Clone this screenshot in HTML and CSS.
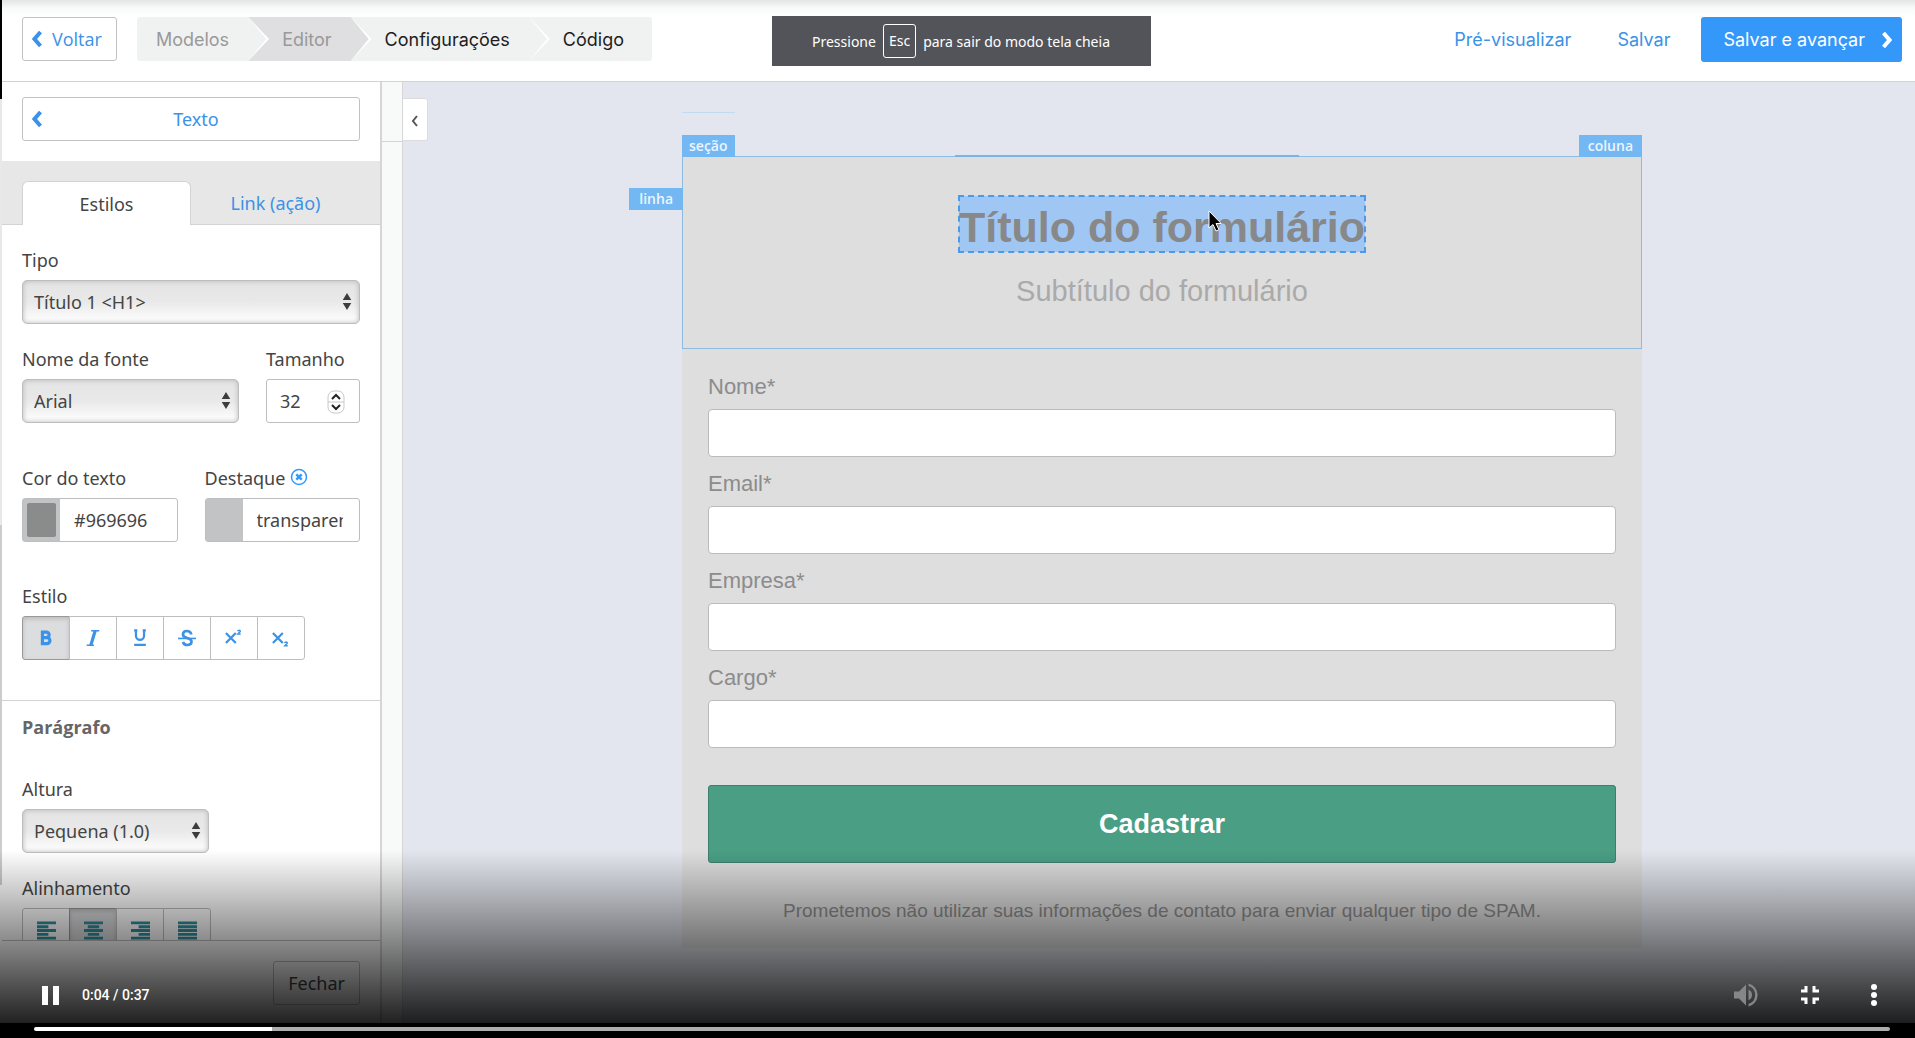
FILE: index.html
```html
<!DOCTYPE html>
<html lang="pt-BR">
<head>
  <meta charset="UTF-8" />
  <meta name="viewport" content="width=device-width, initial-scale=1.0" />
  <title>Editor de formulário</title>
  <link rel="stylesheet" href="styles.css">
</head>
<body>
  <header class="topbar">
    <button class="btn voltar">
      <svg class="chevron" viewBox="0 0 10 18"><path d="M8.500 2 2.500 9l6 7" /></svg>
      Voltar
    </button>
    <nav class="steps">
      <a href="#" class="step done">Modelos</a>
      <a href="#" class="step done current">Editor</a>
      <a href="#" class="step">Configurações</a>
      <a href="#" class="step">Código</a>
    </nav>
    <div class="actions">
      <a href="#">Pré-visualizar</a>
      <a href="#">Salvar</a>
      <button class="avancar">
        Salvar e avançar
        <svg class="chevron" viewBox="0 0 10 18"><path d="M1.500 2l6 7-6 7" /></svg>
      </button>
    </div>
  </header>

  <main class="workspace">
    <aside class="sidebar">
      <div class="panel-head">
        <button class="btn texto">
          <svg class="chevron" viewBox="0 0 10 18"><path d="M8.500 2 2.500 9l6 7" /></svg>
          <span>Texto</span>
        </button>
      </div>
      <div class="tabs">
        <button class="tab active">Estilos</button>
        <button class="tab">Link (ação)</button>
      </div>

      <div class="panel">
        <div class="group">
          <label for="tipo">Tipo</label>
          <div class="select">
            <select id="tipo"><option>Título 1 &lt;H1&gt;</option></select>
            <svg viewBox="0 0 10 18"><path d="M5 0l4.500 7.500h-9zM5 18l4.500-7.500h-9z" /></svg>
          </div>
        </div>

        <div class="row">
          <div class="group fonte">
            <label for="fonte">Nome da fonte</label>
            <div class="select">
              <select id="fonte"><option>Arial</option></select>
              <svg viewBox="0 0 10 18"><path d="M5 0l4.500 7.500h-9zM5 18l4.500-7.500h-9z" /></svg>
            </div>
          </div>
          <div class="group tamanho">
            <label for="tamanho">Tamanho</label>
            <div class="number">
              <input type="number" id="tamanho" value="32" />
              <svg viewBox="0 0 18 24">
                <rect x="1" y="1" width="16" height="22" rx="6" fill="#fff" stroke="#c8c8c8" />
                <path d="M1 12h16" stroke="#c8c8c8" />
                <path d="M5 9l4-4 4 4M5 15l4 4 4-4" fill="none" stroke="#222" stroke-width="2" />
              </svg>
            </div>
          </div>
        </div>

        <div class="row cores">
          <div class="group">
            <label for="cor">Cor do texto</label>
            <div class="color">
              <span class="swatch"><i></i></span>
              <input type="text" id="cor" value="#969696" />
            </div>
          </div>
          <div class="group">
            <label for="destaque">Destaque
              <svg class="clear" viewBox="0 0 18 18"><circle cx="9" cy="9" r="7.500" /><path class="x" d="M6.300 6.300l5.400 5.400M11.700 6.300l-5.400 5.400" /></svg>
            </label>
            <div class="color">
              <span class="swatch"></span>
              <input type="text" id="destaque" value="transparent" />
            </div>
          </div>
        </div>

        <div class="group estilo">
          <span class="label">Estilo</span>
          <div class="btn-group">
            <button class="on" aria-label="Negrito"><svg viewBox="0 0 20 20"><path d="M6 3.500h4.500a3 3 0 0 1 0 6H6zM6 9.500h5a3.400 3.400 0 0 1 0 6.800H6z" stroke-width="3.500" /></svg></button>
            <button aria-label="Itálico"><svg viewBox="0 0 20 20"><path d="M8 2h9M3 18h8" stroke-width="1.800" /><path d="M12.500 2l-5 16" stroke-width="3.500" /></svg></button>
            <button aria-label="Sublinhado"><svg viewBox="0 0 20 20"><path d="M5.500 1v6.500a4.500 4.500 0 0 0 9 0V1M3.500 1.500H7M13 1.500h3.500M3.500 17.500h13" stroke-width="2.500" /></svg></button>
            <button aria-label="Tachado"><svg viewBox="0 0 20 20"><path d="M14.500 6V5C13.500 3 12 2.200 10 2.200 7.500 2.200 5.500 3.500 5.500 6c0 2.500 2.500 3.200 4.500 4 2.500.8 5 1.500 5 4 0 2.300-2 3.800-4.700 3.800-2.300 0-4-1-4.800-3.300" stroke-width="3" /><path d="M0 10.500h20" stroke-width="1.800" /></svg></button>
            <button aria-label="Sobrescrito"><svg viewBox="0 0 20 20"><path d="M1 4.500l11 11M12 4.500l-11 11" stroke-width="2.500" /><path d="M14 2.500c.5-1.500 3-1.500 3 0 0 1.200-2 1.500-3 3.200h3.500" stroke-width="1.600" /></svg></button>
            <button aria-label="Subscrito"><svg viewBox="0 0 20 20"><path d="M1 4.500l11 11M12 4.500l-11 11" stroke-width="2.500" /><path d="M14 15.500c.5-1.500 3-1.500 3 0 0 1.200-2 1.500-3 3.200h3.500" stroke-width="1.600" /></svg></button>
          </div>
        </div>

        <h2>Parágrafo</h2>

        <div class="group altura">
          <label for="altura">Altura</label>
          <div class="select">
            <select id="altura"><option>Pequena (1.0)</option></select>
            <svg viewBox="0 0 10 18"><path d="M5 0l4.500 7.500h-9zM5 18l4.500-7.500h-9z" /></svg>
          </div>
        </div>

        <div class="group">
          <span class="label">Alinhamento</span>
          <div class="btn-group align">
            <button aria-label="Esquerda"><svg viewBox="0 0 20 20"><path d="M0 2h20M0 6h12M0 10h20M0 14h12M0 18h20" /></svg></button>
            <button class="on" aria-label="Centro"><svg viewBox="0 0 20 20"><path d="M0 2h20M4 6h12M0 10h20M4 14h12M0 18h20" /></svg></button>
            <button aria-label="Direita"><svg viewBox="0 0 20 20"><path d="M0 2h20M8 6h12M0 10h20M8 14h12M0 18h20" /></svg></button>
            <button aria-label="Justificado"><svg viewBox="0 0 20 20"><path d="M0 2h20M0 6h20M0 10h20M0 14h20M0 18h20" /></svg></button>
          </div>
        </div>
      </div>

      <div class="panel-foot">
        <button class="btn fechar">Fechar</button>
      </div>
    </aside>

    <div class="gutter"></div>

    <section class="canvas">
      <button class="collapse" aria-label="Recolher painel"><svg viewBox="0 0 8 12"><path d="M6 1L2 6l4 5" /></svg></button>

      <form class="form">
        <span class="guide"></span>
        <div class="form-head">
          <span class="tag secao">seção</span>
          <span class="tag coluna">coluna</span>
          <span class="tag linha">linha</span>
          <span class="drop-line"></span>
          <h1>Título do formulário
            <svg class="cursor" viewBox="0 0 14 22"><path d="M1 1v17l4-3.500 3 6.500 3-1.300-3-6.200h5.200z" /></svg>
          </h1>
          <p>Subtítulo do formulário</p>
        </div>
        <div class="fields">
          <label for="nome">Nome*</label>
          <input type="text" id="nome" />
          <label for="email">Email*</label>
          <input type="text" id="email" />
          <label for="empresa">Empresa*</label>
          <input type="text" id="empresa" />
          <label for="cargo">Cargo*</label>
          <input type="text" id="cargo" />
          <button type="button" class="cadastrar">Cadastrar</button>
          <p>Prometemos não utilizar suas informações de contato para enviar qualquer tipo de SPAM.</p>
        </div>
      </form>
    </section>
  </main>

  <div class="toast">Pressione <kbd>Esc</kbd> para sair do modo tela cheia</div>

  <div class="player">
    <div class="controls">
      <button aria-label="Pausar"><svg viewBox="0 0 24 24"><path d="M4 3h6v19H4zM15 3h6v19h-6z" /></svg></button>
      <span class="time">0:04 / 0:37</span>
      <button class="mute" aria-label="Volume"><svg viewBox="0 0 24 24"><path d="M0 8.500v7h5l7 7v-21l-7 7zM14.500 6.800v10.400a5.600 5.600 0 0 0 0-10.400zM14.500.5v2.600a9.300 9.300 0 0 1 0 17.800v2.600a11.800 11.800 0 0 0 0-23z" /></svg></button>
      <button aria-label="Sair da tela cheia"><svg viewBox="0 0 24 24"><path d="M6.500 3h3v6.500H3v-3h3.500zM14.500 3h3v3.500H21v3h-6.500zM3 14.500h6.500V21h-3v-3.500H3zM14.500 14.500H21v3h-3.500V21h-3z" /></svg></button>
      <button aria-label="Mais opções"><svg viewBox="0 0 24 24"><circle cx="12" cy="4" r="3" /><circle cx="12" cy="12" r="3" /><circle cx="12" cy="20" r="3" /></svg></button>
    </div>
    <div class="timeline">
      <input type="range" min="0" max="1000" value="128" aria-label="Posição do vídeo" />
    </div>
  </div>
</body>
</html>
```
FILE: styles.css
```css
* {
  box-sizing: border-box;
}

body {
  margin: 0;
  padding-left: 2px;
  height: 100vh;
  display: flex;
  flex-direction: column;
  overflow: hidden;
  position: relative;
  font-family: "Noto Sans", "Open Sans", sans-serif;
  font-size: 18px;
  color: #444;
  background: linear-gradient(#000 99px, #e8e8e8 99px, #e8e8e8 525px, #ccc 525px, #ccc 885px, #fff 885px);
}

button, input, select {
  font: inherit;
  color: inherit;
  margin: 0;
}

button {
  cursor: pointer;
  padding: 0;
}

a {
  text-decoration: none;
}

h1, h2, p {
  margin: 0;
}

/* barra superior */
.topbar {
  flex: none;
  height: 82px;
  padding: 17px 13px 0 20px;
  display: flex;
  align-items: flex-start;
  font-family: Inter, Roboto, sans-serif;
  background: linear-gradient(#e3e5e4, #f8faf9 8px, #fff 17px);
  border-bottom: 1px solid #d3d3d3;
}

.chevron {
  width: 10px;
  height: 18px;
  fill: none;
  stroke: currentColor;
  stroke-width: 4;
}

.btn {
  height: 44px;
  display: flex;
  align-items: center;
  border: 1px solid #c2c2c2;
  border-radius: 3px;
  background: #fff;
  color: #3b92e6;
}

.voltar {
  font-family: "Open Sans", sans-serif;
  font-weight: 500;
  padding: 0 14px 0 9px;
  gap: 10px;
}

.steps {
  display: flex;
  margin-left: 20px;
  height: 44px;
  border-radius: 3px;
  overflow: hidden;
  background: #f0f1f1;
}

.step {
  position: relative;
  padding: 0 19px 0 34px;
  line-height: 46px;
  color: #1d1d1d;
}

.step:first-child {
  padding-left: 19px;
}

.step:last-child {
  padding-right: 28px;
}

.step.done {
  color: #999;
}

.step.current {
  background: #dfdfe1;
}

.step::before,
.step::after {
  content: "";
  position: absolute;
  left: 100%;
  top: 0;
  width: 18px;
  height: 44px;
  background: #f0f1f1;
  clip-path: polygon(0 0, 100% 50%, 0 100%);
  z-index: 2;
}

.step::before {
  width: 21px;
  background: #fff;
  z-index: 1;
}

.step.current::after {
  background: #dfdfe1;
}

.step:last-child::before,
.step:last-child::after {
  display: none;
}

.actions {
  margin-left: auto;
  display: flex;
  gap: 46px;
  line-height: 46px;
}

.actions a {
  color: #3b92e6;
}

.avancar {
  height: 45px;
  margin-left: -15px;
  padding: 0 10px 0 22px;
  display: flex;
  align-items: center;
  gap: 17px;
  border: 0;
  border-radius: 3px;
  background: #3498fb;
  color: #fff;
}

/* painel lateral */
.workspace {
  flex: 1;
  min-height: 0;
  display: flex;
}

.sidebar {
  flex: none;
  width: 380px;
  display: flex;
  flex-direction: column;
  background: #fff;
  border-right: 2px solid #d6d6d6;
}

.panel-head {
  padding: 15px 20px 20px;
}

.texto {
  width: 100%;
  padding: 0 9px;
}

.texto span {
  flex: 1;
}

.tabs {
  flex: none;
  height: 64px;
  padding: 20px 20px 0;
  display: flex;
  background: #e7e7e7;
  border-bottom: 1px solid #d3d3d3;
}

.tab {
  flex: 1;
  height: 44px;
  border: 1px solid transparent;
  background: none;
  color: #3b92e6;
}

.tab.active {
  color: #444;
  background: #fff;
  border-color: #d3d3d3;
  border-bottom: 0;
  border-radius: 6px 6px 0 0;
}

.panel {
  flex: 1;
  min-height: 0;
  overflow: hidden;
  padding: 21px 20px 0;
}

.group {
  min-width: 0;
  margin-bottom: 21px;
}

.group label,
.group .label {
  display: block;
  height: 34px;
  line-height: 29px;
  white-space: nowrap;
}

.row {
  display: flex;
  gap: 27px;
  margin-bottom: 20px;
}

.fonte {
  width: 217px;
}

.tamanho {
  flex: 1;
}

.cores {
  margin-bottom: 19px;
}

.cores .group {
  flex: 1;
}

.select,
.number {
  position: relative;
}

.select select {
  appearance: none;
  width: 100%;
  height: 44px;
  padding: 0 11px;
  border: 1px solid #bcbec0;
  border-radius: 5px;
  background: linear-gradient(#e4e4e4, #e9e9e9 50%, #fff);
  box-shadow: inset 0 0 5px #b4b6b8;
}

.select svg {
  position: absolute;
  right: 8px;
  top: 13px;
  width: 10px;
  height: 17px;
  fill: #3c3c3c;
  pointer-events: none;
}

.number input {
  appearance: textfield;
  width: 100%;
  height: 44px;
  padding: 0 13px;
  border: 1px solid #bcbec0;
  border-radius: 3px;
}

.number input::-webkit-inner-spin-button {
  appearance: none;
}

.number svg {
  position: absolute;
  right: 15px;
  top: 11px;
  width: 18px;
  height: 24px;
}

.color {
  display: flex;
  height: 44px;
  border: 1px solid #bcbec0;
  border-radius: 3px;
  background: #fff;
}

.swatch {
  flex: none;
  width: 37px;
  padding: 4px;
  background: #c2c3c4;
}

.swatch i {
  display: block;
  height: 100%;
  border-radius: 2px;
  background: #8a8b8b;
}

.color input {
  flex: 1;
  min-width: 0;
  margin: 0 16px 0 14px;
  padding: 0;
  border: 0;
  outline: 0;
  background: none;
}

.clear {
  width: 18px;
  height: 18px;
  vertical-align: -1px;
  fill: none;
  stroke: #3498fb;
  stroke-width: 1.5;
}

.clear .x {
  stroke-width: 2.5;
}

.estilo {
  margin-bottom: 40px;
}

.btn-group {
  display: flex;
}

.btn-group button {
  display: flex;
  align-items: center;
  justify-content: center;
  width: 48px;
  height: 44px;
  margin-right: -1px;
  border: 1px solid #bcbec0;
  background: #fff;
  color: #3b92e6;
}

.btn-group button:first-child {
  border-radius: 3px 0 0 3px;
}

.btn-group button:last-child {
  border-radius: 0 3px 3px 0;
}

.btn-group .on {
  background: #dcdddf;
  border-color: #999;
  box-shadow: inset 0 2px 4px #bbb;
}

.btn-group svg {
  width: 18px;
  height: 18px;
  fill: none;
  stroke: currentColor;
}

.align button {
  color: #2f8f9e;
}

.align svg {
  width: 19px;
  height: 19px;
  stroke-width: 3;
}

.panel h2 {
  margin: 0 -20px 35px;
  padding: 13px 20px 0;
  border-top: 1px solid #d3d3d3;
  font-family: "Open Sans", sans-serif;
  font-size: 18px;
  line-height: 26px;
  color: #666;
}

.altura .select {
  width: 187px;
}

.panel-foot {
  flex: none;
  height: 98px;
  padding: 20px;
  display: flex;
  justify-content: flex-end;
  align-items: flex-start;
  border-top: 1px solid #c2c2c2;
}

.fechar {
  padding: 0 14px;
  color: #444;
}

.gutter {
  flex: none;
  width: 21px;
  background: linear-gradient(#d3d3d3, #d3d3d3) 0 59px / 100% 1px no-repeat #f8faf9;
  border-right: 1px solid #d6d6d6;
}

/* área do formulário */
.canvas {
  position: relative;
  flex: 1;
  min-width: 0;
  padding: 74px 20px 0 26px;
  background: #e3e6ee;
}

.collapse {
  position: absolute;
  left: 0;
  top: 16px;
  width: 25px;
  height: 43px;
  border: 1px solid #dcdcdc;
  border-left: 0;
  border-radius: 0 3px 3px 0;
  background: #fff;
}

.collapse svg {
  width: 8px;
  height: 12px;
  fill: none;
  stroke: #555;
  stroke-width: 2;
}

.form {
  position: relative;
  max-width: 960px;
  margin: 0 auto;
  font-family: Arial, "Liberation Sans", sans-serif;
  background: #dedede;
}

.guide {
  position: absolute;
  left: 0;
  top: -44px;
  width: 53px;
  height: 1px;
  background: #bddcf0;
}

.form-head {
  position: relative;
  height: 193px;
  padding-top: 39px;
  display: flex;
  flex-direction: column;
  align-items: center;
  border: 1px solid #8dbbe2;
}

.tag {
  position: absolute;
  height: 22px;
  padding: 0 7px;
  font-family: "Open Sans", sans-serif;
  font-size: 14px;
  font-weight: 600;
  line-height: 21px;
  color: #eaf5ff;
  background: #74b8f3;
}

.secao {
  left: -1px;
  top: -22px;
}

.coluna {
  right: -1px;
  top: -22px;
  padding: 0 9px;
}

.linha {
  right: 100%;
  top: 31px;
  padding: 0 10px;
}

.drop-line {
  position: absolute;
  left: 272px;
  right: 342px;
  top: -2px;
  height: 2px;
  background: #78b4e6;
}

.form-head h1 {
  position: relative;
  padding-top: 6px;
  font-size: 43px;
  line-height: 50px;
  color: #888;
  background: #a0c6f4;
  outline: 2px dashed #4a9ae8;
  outline-offset: -1px;
}

.cursor {
  position: absolute;
  left: 249px;
  top: 14px;
  width: 14px;
  height: 22px;
  fill: #000;
  stroke: #fff;
  stroke-width: 1;
}

.form-head p {
  margin-top: 20px;
  font-size: 29px;
  line-height: 38px;
  color: #aaa;
}

.fields {
  padding: 11px 26px 25px;
  display: flex;
  flex-direction: column;
}

.fields label {
  padding: 15px 0 10px;
  font-size: 22px;
  line-height: 24px;
  color: #8c8c8c;
}

.fields input {
  height: 48px;
  border: 1px solid #b9bbbc;
  border-radius: 4px;
  background: #fff;
}

.cadastrar {
  height: 78px;
  margin: 37px 0 36px;
  border: 1px solid #3c7f70;
  border-radius: 3px;
  background: #499e84;
  color: #fff;
  font-size: 27px;
  font-weight: bold;
}

.fields p {
  font-size: 19px;
  line-height: 24px;
  text-align: center;
  color: #8c8c8c;
}

/* aviso de tela cheia */
.toast {
  position: absolute;
  top: 16px;
  left: 50%;
  width: 379px;
  height: 50px;
  margin-left: -186px;
  display: flex;
  align-items: center;
  justify-content: center;
  gap: 7px;
  font-family: "Noto Sans", sans-serif;
  font-size: 14px;
  color: #fff;
  background: #535459;
}

.toast kbd {
  padding: 0 5px;
  font: inherit;
  line-height: 32px;
  border: 1px solid #fff;
  border-radius: 3px;
}

/* controles do vídeo */
.player {
  position: absolute;
  left: 0;
  right: 0;
  bottom: 0;
}

.controls {
  height: 173px;
  padding: 117px 29px 0 38px;
  display: flex;
  align-items: flex-start;
  color: #fff;
  background: linear-gradient(rgba(0, 0, 0, 0), rgba(0, 0, 0, 0.87));
}

.controls button {
  width: 24px;
  height: 56px;
  margin-left: 40px;
  border: 0;
  background: none;
  color: inherit;
}

.controls button:first-child {
  margin-left: 0;
}

.controls svg {
  display: block;
  width: 24px;
  height: 24px;
  margin: 16px 0;
  fill: currentColor;
}

.time {
  margin: 0 auto 0 20px;
  font-family: Roboto, sans-serif;
  font-size: 14px;
  font-weight: 500;
  line-height: 56px;
}

.controls .mute {
  color: #858688;
}

.timeline {
  height: 15px;
  padding: 4px 25px 0 34px;
  background: #000;
}

.timeline input {
  appearance: none;
  display: block;
  width: 100%;
  height: 4px;
  border-radius: 2px;
  background: linear-gradient(90deg, #fff 12.8%, #aeacae 12.8%);
}

.timeline input::-webkit-slider-thumb {
  appearance: none;
  width: 1px;
  height: 4px;
  background: transparent;
}
```
